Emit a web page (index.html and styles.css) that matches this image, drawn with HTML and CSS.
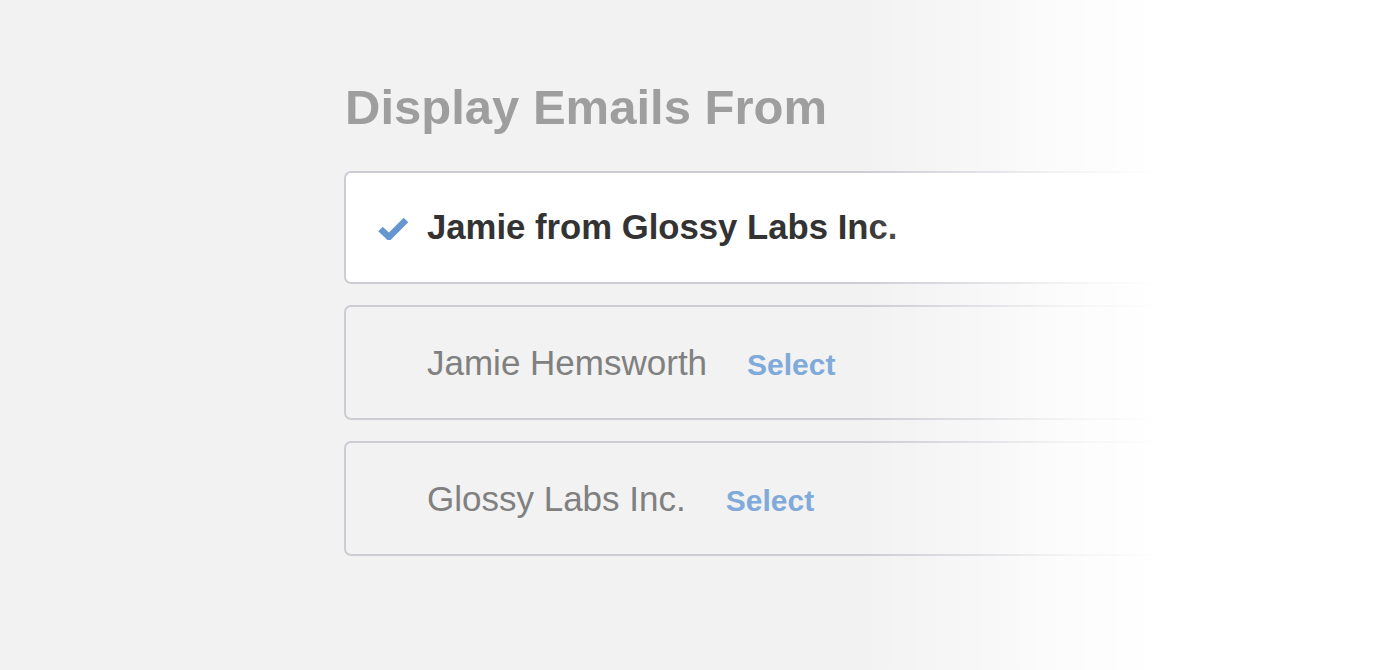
FILE: index.html
```
<!DOCTYPE html>
<html>

<head>
    <title>Display Emails From</title>
    <link rel="stylesheet" href="styles.css">
</head>

<body>
    <main class="picker">
        <h1 class="picker-title">Display Emails From</h1>
        <ul class="sender-list">
            <li class="sender sender-active">
                <span class="sender-check">
                    <svg width="30" height="24" viewBox="0 0 30 24">
                        <polyline points="2.5,13 11,21 28,4" fill="none" stroke="#6696cf" stroke-width="6.5" stroke-linejoin="miter" />
                    </svg>
                </span>
                <span class="sender-name">Jamie from Glossy Labs Inc.</span>
            </li>
            <li class="sender">
                <span class="sender-check"></span>
                <span class="sender-name">Jamie Hemsworth</span>
                <a class="sender-select" href="#">Select</a>
            </li>
            <li class="sender">
                <span class="sender-check"></span>
                <span class="sender-name">Glossy Labs Inc.</span>
                <a class="sender-select" href="#">Select</a>
            </li>
        </ul>
    </main>
    <div class="fade"></div>
</body>

</html>
```

FILE: styles.css
```
html, body {
    margin: 0;
    padding: 0;
    height: 100%;
    overflow: hidden;
}

body {
    background: #f2f2f2;
    font-family: "Liberation Sans", Arial, sans-serif;
}

.picker {
    padding: 83px 0 0 344px;
}

.picker-title {
    margin: 0 0 39px 1px;
    font-size: 49px;
    line-height: 1;
    font-weight: bold;
    color: #9e9e9e;
}

.sender-list {
    list-style: none;
    margin: 0;
    padding: 0;
    width: 1100px;
}

.sender {
    box-sizing: border-box;
    display: flex;
    align-items: center;
    height: 115px;
    margin-bottom: 21px;
    padding-left: 32px;
    border: 2px solid #cbcdd3;
    border-radius: 7px;
    background: #f2f2f2;
}

.sender-active {
    height: 113px;
    background: #fff;
}

.sender-check {
    display: flex;
    width: 30px;
    margin-right: 19px;
}

.sender-name {
    font-size: 35px;
    line-height: 1;
    color: #808080;
}

.sender-active .sender-name {
    font-size: 34.7px;
    font-weight: bold;
    color: #333;
}

.sender-select {
    margin-left: 40px;
    font-size: 30px;
    line-height: 1;
    font-weight: bold;
    color: #80aad9;
    text-decoration: none;
    position: relative;
    top: 2px;
}

.fade {
    position: absolute;
    top: 0;
    left: 0;
    right: 0;
    bottom: 0;
    background: linear-gradient(to right, rgba(255,255,255,0) 860px, rgba(255,255,255,0.35) 960px, rgba(255,255,255,0.75) 1060px, #fff 1160px);
}
```
